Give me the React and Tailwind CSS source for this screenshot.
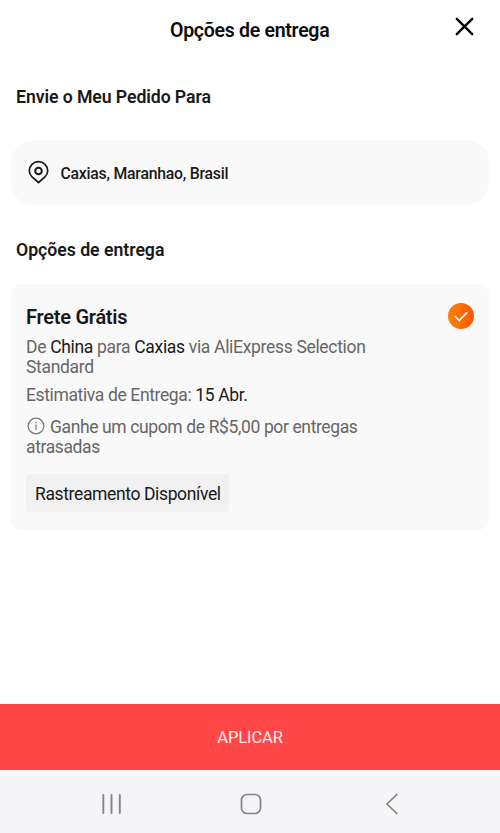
const TrackingTag = ({ children }) => (
  <span className="inline-flex h-[38px] w-[203px] items-center rounded-[3px] bg-[#f1f1f1] pt-px pl-[9px] text-[17.5px] tracking-[-0.37px] whitespace-nowrap text-[#191919]">
    {children}
  </span>
);

const NavBar = () => (
  <nav className="flex h-[63px] items-center justify-between bg-[#f5f5f8] pt-[4px] pr-[101px] pl-[102px] text-[#858585]">
    <button aria-label="Recentes">
      <svg width="20" height="22" viewBox="0 0 20 22" fill="none" stroke="currentColor" strokeWidth="1.9" strokeLinecap="round">
        <path d="M1.300 2v18M9.500 2v18M17.800 2v18" />
      </svg>
    </button>
    <button aria-label="Início" className="mr-[7px]">
      <svg width="22" height="22" viewBox="0 0 22 22" fill="none" stroke="currentColor" strokeWidth="1.7">
        <rect x="1.500" y="1.500" width="19" height="19" rx="5.500" />
      </svg>
    </button>
    <button aria-label="Voltar">
      <svg width="13" height="22" viewBox="0 0 13 22" fill="none" stroke="currentColor" strokeWidth="1.7" strokeLinecap="round">
        <path d="M10.800 1.500L1 11l9.800 9.500" />
      </svg>
    </button>
  </nav>
);

const App = () => {
  return (
    <div className="flex h-[833px] w-[500px] flex-col overflow-hidden bg-white font-['Roboto',sans-serif] text-[#191919]">
      <header className="flex h-[60px] items-center justify-between pr-[26px] pl-[170px]">
        <h1 className="pt-[2px] text-[19.5px] font-semibold tracking-[-0.28px] whitespace-nowrap text-[#0c0c0c]">Opções de entrega</h1>
        <button aria-label="Fechar" className="-mt-[7px]">
          <svg width="19" height="19" viewBox="0 0 19 19" fill="none" stroke="#000" strokeWidth="2.4" strokeLinecap="round">
            <path d="M1.800 1.800l15.400 15.400M17.200 1.800L1.800 17.200" />
          </svg>
        </button>
      </header>

      <main className="flex-1 px-[11px]">
        <h2 className="mt-[25px] pl-[5px] text-[17.7px] leading-6 font-semibold tracking-[-0.09px]">Envie o Meu Pedido Para</h2>
        <div className="mt-[31px] flex h-[65px] items-center rounded-[22px] bg-[#f9f9f9] pl-[17px]">
          <svg className="-mt-[2px]" width="21" height="24" viewBox="0 0 21 24" fill="none" stroke="#191919" strokeWidth="1.7" strokeLinejoin="round">
            <path d="M10.500 22.500L4 16.800C2 15 1.300 12.800 1.300 10.800a9.200 9.200 0 0 1 18.400 0c0 2-.7 4.200-2.700 6z" />
            <circle cx="10.500" cy="11" r="3.300" strokeWidth="2" />
          </svg>
          <span className="ml-[11.5px] pt-[2px] text-[15.8px] font-medium tracking-[-0.24px]">Caxias, Maranhao, Brasil</span>
        </div>

        <h2 className="mt-[33px] pl-[5px] text-[17.7px] leading-6 font-semibold tracking-[-0.03px]">Opções de entrega</h2>
        <section className="mt-[22px] flex h-[246px] justify-between rounded-[10px] bg-[#f9f9f9] pt-[18px] pr-[15px] pl-[15px]">
          <div className="w-[370px] text-[17.5px] leading-5 tracking-[-0.32px] text-[#666]">
            <h3 className="text-[20px] leading-[30px] font-semibold tracking-[-0.26px] text-[#191919]">Frete Grátis</h3>
            <p className="mt-[5px]">
              De <span className="text-[#191919]">China</span> para <span className="text-[#191919]">Caxias</span> via AliExpress Selection
              <br />
              Standard
            </p>
            <p className="mt-[8px] tracking-[-0.37px]">
              Estimativa de Entrega: <span className="text-[#191919]">15 Abr.</span>
            </p>
            <p className="mt-[12px] tracking-[-0.38px]">
              <svg className="mr-[5px] inline-block align-[-2px]" width="19" height="18" viewBox="0 0 19 18" fill="none" stroke="#747474" strokeWidth="1.2">
                <circle cx="10" cy="9" r="7.800" />
                <path d="M10 7.500v5.500M10 4.800v1.500" />
              </svg>
              Ganhe um cupom de R$5,00 por entregas
              <br />
              atrasadas
            </p>
            <div className="mt-[17px]">
              <TrackingTag>Rastreamento Disponível</TrackingTag>
            </div>
          </div>
          <span className="mt-px flex size-[26px] items-center justify-center rounded-full bg-linear-to-r from-[#ff8000] to-[#ff5500]">
            <svg className="mt-px" width="14" height="11" viewBox="0 0 14 11" fill="none" stroke="#fff" strokeWidth="1.7" strokeLinecap="round">
              <path d="M1.200 5.500l4 4 7.400-7.600" />
            </svg>
          </span>
        </section>
      </main>

      <button className="h-[66px] bg-[#ff4747] pt-[2px] text-[16.5px] tracking-[-0.1px] text-white/90">APLICAR</button>
      <NavBar />
    </div>
  );
};

export default App;
